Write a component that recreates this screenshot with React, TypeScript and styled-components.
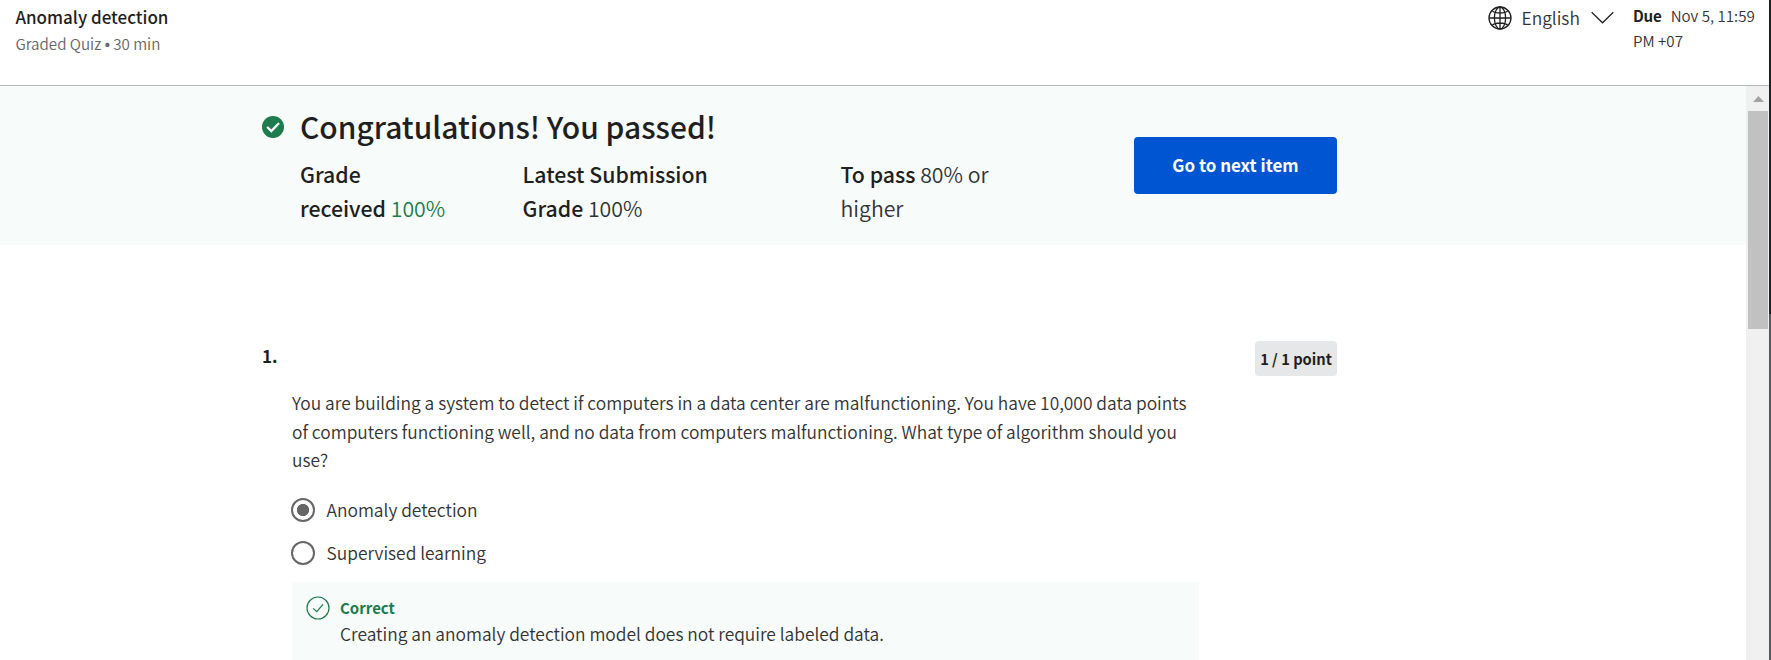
import React from "react";
import styled, { createGlobalStyle } from "styled-components";

const GlobalStyle = createGlobalStyle`
  *, *::before, *::after { box-sizing: border-box; }
  body {
    margin: 0;
    background: #fff;
    color: #1f1f1f;
    font-family: "Source Sans Pro", "Noto Sans CJK SC", "Noto Sans", sans-serif;
    font-size: 17.37px;
    font-weight: 350;
    overflow: hidden;
  }
  h1, h2, p, fieldset { margin: 0; padding: 0; border: 0; font-weight: 350; }
`;

const Window = styled.div`
  display: flex;
  width: 100%;
  height: 660px;
  overflow: hidden;
`;

const Page = styled.div`
  flex: 1;
  min-width: 0;
  display: flex;
  flex-direction: column;
`;

const WindowEdge = styled.div`
  width: 2px;
  flex: none;
  background: linear-gradient(#1f2022 314px, #55585a 314px);
`;

const Header = styled.header`
  height: 86px;
  flex: none;
  display: flex;
  justify-content: space-between;
  padding: 4px 10px 0 15.4px;
  border-bottom: 1px solid #b4b9b7;
`;

const QuizTitle = styled.h1`
  font-size: 17px;
  font-weight: 500;
  line-height: 26px;
`;

const QuizMeta = styled.p`
  font-size: 15.15px;
  line-height: 27px;
  color: #666;
`;

const Bullet = styled.span`
  font-family: "Noto Sans", sans-serif;
  font-weight: 600;
  margin: 0 -0.3px;
`;

const HeaderTools = styled.div`
  display: flex;
  align-items: flex-start;
`;

const LanguagePicker = styled.div`
  display: flex;
  align-items: center;
  line-height: 27px;
  color: #333;
  svg { flex: none; }
`;

const LanguageName = styled.span`
  width: 58px;
  margin: 0 11px 0 9.5px;
  white-space: nowrap;
`;

const DueDate = styled.p`
  width: 126px;
  margin-left: 19.5px;
  margin-top: -1px;
  font-size: 15.15px;
  line-height: 25px;
  color: #333;
`;

const DueLabel = styled.strong`
  font-weight: 700;
  color: #1f1f1f;
  margin-right: 9px;
  letter-spacing: -0.2px;
`;

const Body = styled.div`
  flex: 1;
  min-height: 0;
  display: flex;
`;

const Content = styled.main`
  flex: 1;
  min-width: 0;
  overflow: hidden;
`;

const Scrollbar = styled.div`
  width: 23px;
  flex: none;
  display: flex;
  flex-direction: column;
  background: #f0f0f0;
`;

const ScrollArrow = styled.div`
  height: 25px;
  padding: 10px 0 0 7px;
  svg { display: block; }
`;

const ScrollThumb = styled.div`
  width: 20px;
  height: 218px;
  margin-left: 2px;
  background: #c1c1c1;
`;

const Banner = styled.section`
  height: 159px;
  display: flex;
  padding: 21px 0 0 262px;
  background: #f7fbfa;
`;

const BannerIcon = styled.div`
  width: 38px;
  padding-top: 9px;
  svg { display: block; }
`;

const BannerText = styled.div`
  width: 834px;
`;

const BannerHeading = styled.h2`
  font-size: 29.95px;
  font-weight: 500;
  line-height: 38px;
  margin-bottom: 12px;
`;

const Grades = styled.div`
  display: grid;
  grid-template-columns: 222.5px 318px 160px;
`;

const GradeItem = styled.p<{ $width: number }>`
  width: ${(p) => p.$width}px;
  font-size: 21.27px;
  line-height: 34px;
  color: #333;
`;

const GradeLabel = styled.strong`
  font-weight: 500;
  color: #1f1f1f;
`;

const Passed = styled.span`
  color: #1d7c4d;
`;

const NextButton = styled.button`
  width: 203px;
  height: 57px;
  margin-top: 30px;
  padding: 0 0 2px;
  border: 0;
  border-radius: 4px;
  background: #0056d2;
  color: #fff;
  font: inherit;
  font-weight: 700;
  font-size: 16.95px;
  line-height: 54px;
`;

const Question = styled.section`
  padding: 96px 0 0 262px;
`;

const QuestionTop = styled.div`
  display: flex;
  justify-content: space-between;
  width: 1075px;
  height: 48px;
`;

const QuestionNumber = styled.span`
  font-size: 17px;
  font-weight: 700;
  line-height: 29px;
`;

const PointsBadge = styled.span`
  width: 82px;
  height: 35px;
  border-radius: 4px;
  background: #e5e7e8;
  font-size: 14.7px;
  font-weight: 700;
  line-height: 36px;
  text-align: center;
  white-space: nowrap;
`;

const QuestionBody = styled.div`
  width: 907px;
  margin-left: 30px;
`;

const Prompt = styled.p`
  line-height: 28.6px;
  color: #333;
`;

const Options = styled.fieldset`
  display: grid;
  gap: 15px;
  padding: 21px 0 0;
`;

const Option = styled.label`
  display: flex;
  align-items: center;
  gap: 11.5px;
  height: 28px;
  margin-left: -1px;
  color: #333;
`;

const Radio = styled.span<{ $checked?: boolean }>`
  width: 24px;
  height: 24px;
  flex: none;
  border: 2px solid #666;
  border-radius: 50%;
  background: ${(p) => (p.$checked ? "radial-gradient(circle, #666 5.7px, transparent 6.5px)" : "none")};
`;

const Feedback = styled.div`
  display: flex;
  gap: 10px;
  height: 100px;
  margin-top: 15px;
  padding: 14px 0 0 14px;
  background: #f7fbfa;
  svg { flex: none; }
`;

const FeedbackTitle = styled.p`
  padding-top: 1px;
  font-size: 15px;
  font-weight: 700;
  line-height: 22px;
  color: #1d7c4d;
`;

const FeedbackText = styled.p`
  line-height: 29px;
  color: #333;
`;

const GlobeIcon = () => (
  <svg width="24" height="24" viewBox="0 0 24 24" fill="none" stroke="#1f1f1f" strokeWidth="1.3">
    <circle cx="12" cy="12" r="11" />
    <ellipse cx="12" cy="12" rx="5.6" ry="11" />
    <path d="M12 1v22M1 12h22M4 4.600C5.800 6.300 8.600 7 12 7s6.200-.7 8-2.400M4 19.400C5.800 17.700 8.600 17 12 17s6.200.7 8 2.400" />
  </svg>
);

const ChevronIcon = () => (
  <svg width="23" height="13" viewBox="0 0 23 13" fill="none" stroke="#1f1f1f" strokeWidth="1.2">
    <path d="M.7 1.200 11.500 11.800 22.300 1.200" />
  </svg>
);

const SolidCheckIcon = () => (
  <svg width="22" height="22" viewBox="0 0 22 22" fill="none">
    <circle cx="11" cy="11" r="11" fill="#1d7c4d" />
    <path d="M5.700 11.500 9.300 15 16.400 7.700" stroke="#fff" strokeWidth="2.300" strokeLinecap="round" />
  </svg>
);

const OutlineCheckIcon = () => (
  <svg width="24" height="24" viewBox="0 0 24 24" fill="none" stroke="#1d7c4d" strokeWidth="1.200">
    <circle cx="12" cy="12" r="11" />
    <path d="M7.200 12.400 10.700 15.600 17 8.300" />
  </svg>
);

export default function App() {
  return (
    <>
      <GlobalStyle />
      <Window>
        <Page>
          <Header>
            <div>
              <QuizTitle>Anomaly detection</QuizTitle>
              <QuizMeta>
                Graded Quiz <Bullet>•</Bullet> 30 min
              </QuizMeta>
            </div>
            <HeaderTools>
              <LanguagePicker>
                <GlobeIcon />
                <LanguageName>English</LanguageName>
                <ChevronIcon />
              </LanguagePicker>
              <DueDate>
                <DueLabel>Due</DueLabel>Nov 5, 11:59 PM +07
              </DueDate>
            </HeaderTools>
          </Header>
          <Body>
            <Content>
              <Banner>
                <BannerIcon>
                  <SolidCheckIcon />
                </BannerIcon>
                <BannerText>
                  <BannerHeading>Congratulations! You passed!</BannerHeading>
                  <Grades>
                    <GradeItem $width={148}>
                      <GradeLabel>Grade received</GradeLabel> <Passed>100%</Passed>
                    </GradeItem>
                    <GradeItem $width={220}>
                      <GradeLabel>Latest Submission Grade</GradeLabel> 100%
                    </GradeItem>
                    <GradeItem $width={160}>
                      <GradeLabel>To pass</GradeLabel> 80% or higher
                    </GradeItem>
                  </Grades>
                </BannerText>
                <NextButton>Go to next item</NextButton>
              </Banner>
              <Question>
                <QuestionTop>
                  <QuestionNumber>1.</QuestionNumber>
                  <PointsBadge>1 / 1 point</PointsBadge>
                </QuestionTop>
                <QuestionBody>
                  <Prompt>
                    You are building a system to detect if computers in a data center are malfunctioning. You have
                    10,000 data points of computers functioning well, and no data from computers malfunctioning. What
                    type of algorithm should you use?
                  </Prompt>
                  <Options>
                    <Option>
                      <Radio $checked />
                      Anomaly detection
                    </Option>
                    <Option>
                      <Radio />
                      Supervised learning
                    </Option>
                  </Options>
                  <Feedback>
                    <OutlineCheckIcon />
                    <div>
                      <FeedbackTitle>Correct</FeedbackTitle>
                      <FeedbackText>Creating an anomaly detection model does not require labeled data.</FeedbackText>
                    </div>
                  </Feedback>
                </QuestionBody>
              </Question>
            </Content>
            <Scrollbar>
              <ScrollArrow>
                <svg width="11" height="6" viewBox="0 0 11 6">
                  <path d="M5.500 0 11 6H0Z" fill="#a3a3a3" />
                </svg>
              </ScrollArrow>
              <ScrollThumb />
            </Scrollbar>
          </Body>
        </Page>
        <WindowEdge />
      </Window>
    </>
  );
}
